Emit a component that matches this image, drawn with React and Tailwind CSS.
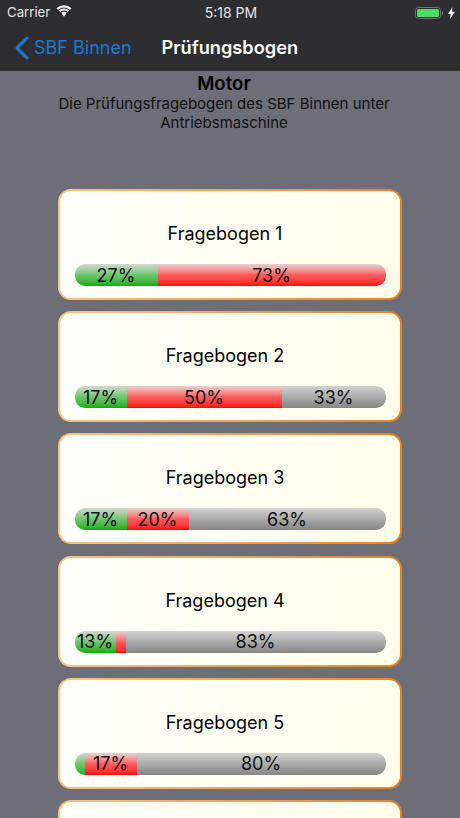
import React from 'react';

const sheets = [
    { name: 'Fragebogen 1', green: 83, red: 228, gray: 0, labels: ['27%', '73%', ''] },
    { name: 'Fragebogen 2', green: 52, red: 155, gray: 104, labels: ['17%', '50%', '33%'] },
    { name: 'Fragebogen 3', green: 52, red: 62, gray: 197, labels: ['17%', '20%', '63%'] },
    { name: 'Fragebogen 4', green: 41, red: 10, gray: 260, labels: ['13%', '', '83%'] },
    { name: 'Fragebogen 5', green: 10, red: 52, gray: 249, labels: ['', '17%', '80%'] },
];

const Segment = ({ width, className, label }) => {
    if (!width) return null;
    return (
        <div
            className={`flex shrink-0 items-center justify-center overflow-visible pt-[1px] text-[18px] leading-none text-[#111] ${className}`}
            style={{ width }}
        >
            {label}
        </div>
    );
};

const CardFrame = ({ children }) => (
    <div className="h-[111px] shrink-0 rounded-[13px] bg-gradient-to-r from-[#f7c583] to-[#e8821e] p-[2px]">
        <div className="flex h-full flex-col items-center rounded-[11px] bg-gradient-to-r from-[#fffffa] to-[#fffdea] px-[15px] pt-[30px]">
            {children}
        </div>
    </div>
);

const SheetCard = ({ sheet }) => (
    <CardFrame>
        <div className="w-full pr-[10px] text-center text-[18px] leading-[26px] text-black">{sheet.name}</div>
        <div className="mt-[17px] flex h-[22px] w-[311px] overflow-hidden rounded-[10px]">
            <Segment width={sheet.green} label={sheet.labels[0]} className="bg-gradient-to-b from-[#d2d8d2] via-[#6ec56e] to-[#00ae00]" />
            <Segment width={sheet.red} label={sheet.labels[1]} className="bg-gradient-to-b from-[#e2d2d2] via-[#fb5a60] to-[#ff0000]" />
            <Segment width={sheet.gray} label={sheet.labels[2]} className="bg-gradient-to-b from-[#d2d2d2] to-[#858585]" />
        </div>
    </CardFrame>
);

const StatusBar = () => (
    <div className="flex h-6 items-center justify-between pl-[7px] pr-[5px] pt-[1px] text-[14px] text-[#e4e4e4]">
        <div className="flex w-[150px] items-center gap-[6px]">
            <span className="text-[13.2px]">Carrier</span>
            <svg width="16" height="12" viewBox="0 0 16 12" fill="#f2f2f2" className="-mt-[3px]">
                <path d="M8 2.400c2.300 0 4.400.9 6 2.400L15.500 3.300A10.800 10.800 0 0 0 8 .2 10.800 10.800 0 0 0 .5 3.300L2 4.800a8.700 8.700 0 0 1 6-2.400z" />
                <path d="M8 5.600c1.400 0 2.700.5 3.700 1.400l1.500-1.500A7.600 7.600 0 0 0 8 3.400a7.600 7.600 0 0 0-5.200 2.100L4.300 7A5.500 5.500 0 0 1 8 5.600z" />
                <path d="M8 6.700c-1 0-1.900.4-2.600 1L8 11.800l2.600-4.100c-.7-.6-1.600-1-2.600-1z" />
            </svg>
        </div>
        <span>5:18 PM</span>
        <div className="flex w-[150px] items-center justify-end gap-[3px]">
            <div className="flex h-[12px] w-[26px] items-center rounded-[3.5px] border-[1.5px] border-[#737373] p-[1px]">
                <div className="h-full w-full rounded-[1.5px] bg-[#4cd964]" />
            </div>
            <div className="-ml-[2px] h-[4px] w-[1.5px] rounded-r-sm bg-[#737373]" />
            <svg width="7" height="12" viewBox="0 0 7 12" fill="#f2f2f2" className="ml-[2px]">
                <path d="M4.400 0 0 6.900h2.700L2 12l5-7.300H4z" />
            </svg>
        </div>
    </div>
);

const NavBar = () => (
    <div className="flex h-[47px] items-center pl-[14px]">
        <svg width="15" height="24" viewBox="0 0 15 24" fill="none" stroke="#1a78d8" strokeWidth="3" strokeLinecap="round" strokeLinejoin="round">
            <path d="M13 2 3 12l10 10" />
        </svg>
        <span className="ml-[5px] text-[18px] text-[#1a78d8]">SBF Binnen</span>
        <span className="ml-[30px] text-[18.2px] font-semibold text-white">Prüfungsbogen</span>
    </div>
);

export default function App() {
    return (
        <div className="flex h-[818px] w-[460px] flex-col overflow-hidden bg-[#6d6e78] font-['Inter',sans-serif]">
            {/* Header */}
            <div className="h-[71px] shrink-0 bg-[#2e2e30]">
                <StatusBar />
                <NavBar />
            </div>

            {/* Intro */}
            <div className="h-[118px] shrink-0 pl-[28px] pr-[40px] pt-[1px] text-center text-[#111]">
                <div className="text-[18.6px] font-semibold leading-[22px] text-black">Motor</div>
                <div className="text-[15px] leading-[19px]">
                    Die Prüfungsfragebogen des SBF Binnen unter
                    <br />
                    Antriebsmaschine
                </div>
            </div>

            {/* Cards */}
            <div className="flex w-[344px] flex-col gap-[11.2px] self-center">
                {sheets.map((sheet) => (
                    <SheetCard key={sheet.name} sheet={sheet} />
                ))}
                <CardFrame />
            </div>
        </div>
    );
}
